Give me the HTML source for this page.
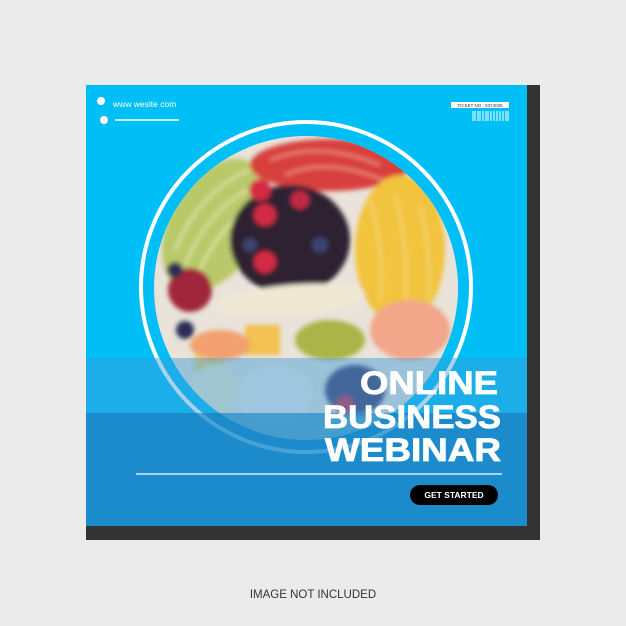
<!DOCTYPE html>
<html><head><style>
body{margin:0;width:626px;height:626px;background:#ebebeb;position:relative;overflow:hidden;font-family:"Liberation Sans",sans-serif}
</style></head><body>
<svg width="626" height="626" style="position:absolute;left:0;top:0">
<defs>
<clipPath id="c"><circle cx="306" cy="288" r="152"/></clipPath>
<filter id="b"><feGaussianBlur stdDeviation="2.5"/></filter>
</defs>
<rect x="86" y="85" width="454" height="455" fill="#333"/>
<rect x="86" y="85" width="441" height="441" fill="#00bff6"/>
<rect x="86" y="413" width="441" height="113" fill="#1b8bcb"/>
<circle cx="306" cy="287" r="165" fill="none" stroke="#fff" stroke-width="4"/>
<g clip-path="url(#c)">
<rect x="150" y="130" width="320" height="320" fill="#e9e3da"/>
<g filter="url(#b)">
<ellipse cx="215" cy="225" rx="45" ry="72" fill="#b9c96a" transform="rotate(30 215 225)"/>
<g stroke="#e8edb0" stroke-width="2" fill="none"><path d="M175 250 Q200 190 250 170"/><path d="M185 265 Q210 205 258 185"/><path d="M195 280 Q220 220 265 200"/></g>
<ellipse cx="330" cy="165" rx="80" ry="26" fill="#d8413c"/>
<g stroke="#f29a88" stroke-width="2" fill="none"><path d="M270 160 Q320 140 380 165"/><path d="M285 175 Q330 155 395 185"/></g>
<ellipse cx="400" cy="250" rx="45" ry="75" fill="#f2c33d"/>
<g stroke="#f7dc7a" stroke-width="2" fill="none"><path d="M370 200 Q385 250 380 300"/><path d="M395 195 Q410 250 405 305"/><path d="M420 205 Q432 255 428 300"/></g>
<ellipse cx="290" cy="240" rx="60" ry="55" fill="#2e2230"/>
<circle cx="265" cy="215" r="11" fill="#d42c45"/>
<circle cx="265" cy="262" r="11" fill="#d42c45"/>
<circle cx="300" cy="200" r="9" fill="#c42a45"/>
<circle cx="260" cy="190" r="11" fill="#d42c45"/>
<circle cx="320" cy="245" r="8" fill="#3a4470"/>
<circle cx="250" cy="245" r="7" fill="#3a4470"/>
<circle cx="190" cy="290" r="22" fill="#a0283a"/>
<circle cx="175" cy="270" r="8" fill="#2a2f55"/>
<circle cx="185" cy="330" r="9" fill="#2a2f55"/>
<ellipse cx="290" cy="300" rx="75" ry="15" fill="#f1e8d4" transform="rotate(-5 290 300)"/>
<ellipse cx="330" cy="340" rx="35" ry="20" fill="#a9b547"/>
<ellipse cx="410" cy="330" rx="40" ry="30" fill="#f2a68a"/>
<rect x="245" y="325" width="35" height="30" fill="#f2c14f"/>
<rect x="195" y="350" width="28" height="22" fill="#f2d070"/>
<ellipse cx="220" cy="345" rx="30" ry="15" fill="#f2a070"/>
<ellipse cx="275" cy="395" rx="38" ry="30" fill="#f3ece6"/>
<ellipse cx="355" cy="390" rx="30" ry="25" fill="#4a3e6a"/>
<circle cx="345" cy="405" r="9" fill="#d42c45"/>
<ellipse cx="215" cy="390" rx="25" ry="25" fill="#f0ebcc"/>
</g>
</g>
<rect x="86" y="358" width="441" height="55" fill="#3b9ad8" opacity="0.45"/>
<rect x="86" y="413" width="441" height="113" fill="#1b8bcb" opacity="0.8"/>
<circle cx="101" cy="101" r="4" fill="#fff"/>
<circle cx="104" cy="120" r="4" fill="#fff"/>
<line x1="115" y1="120" x2="179" y2="120" stroke="#fff" stroke-width="1.5"/>
<text x="113" y="107" font-size="8.5" fill="#fff" font-family="Liberation Sans">www wesite com</text>
<rect x="451" y="102" width="58" height="6" fill="#fff"/>
<text x="480" y="107" font-size="4.5" text-anchor="middle" fill="#333" font-family="Liberation Sans">TICKET NO : 0374036</text>
<g stroke="#fff" stroke-width="1">
<line x1="473" y1="111" x2="473" y2="121"/><line x1="475" y1="111" x2="475" y2="121"/><line x1="478" y1="111" x2="478" y2="121"/><line x1="480" y1="111" x2="480" y2="121"/><line x1="483" y1="111" x2="483" y2="121"/><line x1="486" y1="111" x2="486" y2="121"/><line x1="488" y1="111" x2="488" y2="121"/><line x1="491" y1="111" x2="491" y2="121"/><line x1="494" y1="111" x2="494" y2="121"/><line x1="497" y1="111" x2="497" y2="121"/><line x1="500" y1="111" x2="500" y2="121"/><line x1="503" y1="111" x2="503" y2="121"/><line x1="506" y1="111" x2="506" y2="121"/><line x1="508" y1="111" x2="508" y2="121"/>
</g>
<g font-family="Liberation Sans" font-weight="bold" fill="#fff" text-anchor="end" font-size="32" stroke="#fff" stroke-width="0.8">
<text x="498" y="394" textLength="138" lengthAdjust="spacingAndGlyphs">ONLINE</text>
<text x="501" y="428" textLength="178" lengthAdjust="spacingAndGlyphs">BUSINESS</text>
<text x="501" y="461" textLength="176" lengthAdjust="spacingAndGlyphs">WEBINAR</text>
</g>
<line x1="136" y1="474" x2="502" y2="474" stroke="#cfeeff" stroke-width="1.5"/>
<rect x="410" y="485" width="88" height="20" rx="10" fill="#000"/>
<text x="454" y="498" font-size="8.5" font-weight="bold" fill="#fff" text-anchor="middle" font-family="Liberation Sans">GET STARTED</text>
<text x="313" y="598" font-size="11.5" fill="#333" text-anchor="middle" font-family="Liberation Sans">IMAGE NOT INCLUDED</text>
</svg>
</body></html>
